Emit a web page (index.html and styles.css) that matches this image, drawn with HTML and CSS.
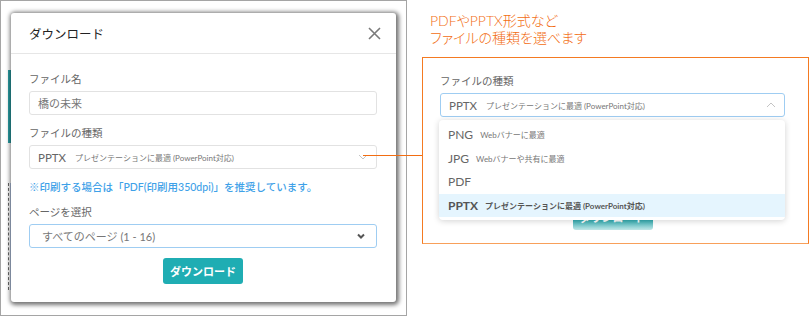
FILE: index.html
```html
<!DOCTYPE html>
<html lang="ja">
  <head>
    <meta charset="UTF-8" />
    <meta name="viewport" content="width=device-width, initial-scale=1.0" />
    <title>ダウンロード</title>
    <link rel="stylesheet" href="styles.css">
  </head>
  <body>
    <div class="page">
      <!-- left: modal screenshot -->
      <div class="shot">
        <div class="backdrop">
          <span class="strip teal"></span>
          <span class="strip dots"></span>
        </div>
        <div class="modal">
          <div class="modal-head">
            <h2>ダウンロード</h2>
            <svg class="close" width="13" height="13" viewBox="0 0 13 13">
              <path d="M1 1 L12 12 M12 1 L1 12" stroke="#7a7a7a" stroke-width="1.6" fill="none" />
            </svg>
          </div>
          <div class="modal-body">
            <div class="label">ファイル名</div>
            <div class="field">橋の未来</div>

            <div class="label gap">ファイルの種類</div>
            <div class="field select">
              <span class="fmt">PPTX</span>
              <span class="desc">プレゼンテーションに最適 (PowerPoint対応)</span>
              <svg class="chev" width="10" height="6" viewBox="0 0 10 6">
                <path d="M1 1 L5 5 L9 1" stroke="#c4c4c4" stroke-width="1" fill="none" />
              </svg>
            </div>

            <p class="note">※印刷する場合は「PDF(印刷用350dpi)」を推奨しています。</p>

            <div class="label gap-sm">ページを選択</div>
            <div class="field select focus pages">
              <span>すべてのページ (1 - 16)</span>
              <svg class="chev" width="8" height="6" viewBox="0 0 8 6">
                <path d="M1 1.5 L4 4.5 L7 1.5" stroke="#555" stroke-width="2" fill="none" />
              </svg>
            </div>

            <button class="btn">ダウンロード</button>
          </div>
        </div>
      </div>

      <span class="connector"></span>

      <!-- right: callout -->
      <div class="callout">
        <p class="callout-title">PDFやPPTX形式など<br />ファイルの種類を選べます</p>
        <div class="callout-box">
          <div class="label">ファイルの種類</div>
          <div class="field select focus">
            <span class="fmt">PPTX</span>
            <span class="desc">プレゼンテーションに最適 (PowerPoint対応)</span>
            <svg class="chev" width="10" height="6" viewBox="0 0 10 6">
              <path d="M1 5 L5 1 L9 5" stroke="#c4c4c4" stroke-width="1" fill="none" />
            </svg>
          </div>
          <div class="stack">
            <button class="btn faded">ダウンロード</button>
            <ul class="dropdown">
              <li><span class="fmt">PNG</span><span class="desc">Webバナーに最適</span></li>
              <li><span class="fmt">JPG</span><span class="desc">Webバナーや共有に最適</span></li>
              <li><span class="fmt">PDF</span></li>
              <li class="active"><span class="fmt">PPTX</span><span class="desc">プレゼンテーションに最適 (PowerPoint対応)</span></li>
            </ul>
          </div>
        </div>
      </div>
    </div>
  </body>
</html>
```

FILE: styles.css
```css
body {
  margin: 0;
  font-family: "Lato", "Noto Sans CJK JP", sans-serif;
  background: #fff;
}
.page {
  position: relative;
  display: flex;
  width: 809px;
  height: 316px;
}

/* left screenshot */
.shot {
  box-sizing: border-box;
  width: 407px;
  height: 316px;
  border: 1px solid #a5a5a5;
  display: grid;
  background: #fff;
}
.backdrop,
.modal {
  grid-area: 1 / 1;
}
.backdrop {
  display: flex;
  flex-direction: column;
  padding: 69px 0 0 7px;
}
.strip {
  display: block;
  width: 3px;
}
.strip.teal {
  height: 73px;
  background: #2a9ea4;
}
.strip.dots {
  margin-top: 40px;
  height: 107px;
  border-left: 1px dashed #666;
  border-right: 1px solid #b7c9e6;
  width: 1px;
}
.modal {
  align-self: start;
  justify-self: start;
  margin: 12px 0 0 10px;
  width: 385px;
  height: 289px;
  background: #fff;
  border-radius: 3px;
  box-shadow: 1px 1px 4px 2px rgba(0, 0, 0, 0.55);
}
.modal-head {
  height: 40px;
  border-bottom: 1px solid #e6e6e6;
  display: flex;
  align-items: center;
  justify-content: space-between;
  padding: 0 15px 0 18px;
}
.modal-head h2 {
  margin: 0;
  font-size: 12.5px;
  font-weight: 400;
  color: #222;
}
.modal-body {
  display: flex;
  flex-direction: column;
  padding: 17px 19px 0 18px;
}
.label {
  font-size: 10.5px;
  line-height: 16px;
  color: #666;
  margin-bottom: 4px;
}
.label.gap {
  margin-top: 10px;
}
.label.gap-sm {
  margin-top: 9px;
}
.field {
  box-sizing: border-box;
  height: 24px;
  border: 1px solid #e2e2e2;
  border-radius: 3px;
  padding: 0 8px;
  display: flex;
  align-items: center;
  font-size: 11px;
  color: #777;
}
.field.focus {
  border-color: #9fcdf2;
}
.field.pages {
  padding: 0 11px 0 12px;
}
.select .chev {
  margin-left: auto;
}
.fmt {
  font-size: 11.5px;
  color: #666;
}
.desc {
  font-size: 8px;
  color: #777;
  margin-left: 9px;
}
.note {
  margin: 10px 0 0;
  font-size: 10.5px;
  line-height: 16px;
  font-weight: 500;
  color: #3ea1e8;
}
.btn {
  align-self: center;
  width: 80px;
  height: 26px;
  margin-top: 10px;
  border: none;
  border-radius: 3px;
  background: #1fadb3;
  color: #fff;
  font-family: inherit;
  font-size: 11px;
  font-weight: bold;
}

/* connector line */
.connector {
  position: absolute;
  left: 363px;
  top: 155px;
  width: 59px;
  height: 1px;
  background: #f26d12;
}

/* right callout */
.callout {
  display: flex;
  flex-direction: column;
  padding: 12px 0 0 15px;
}
.callout-title {
  margin: 0 0 0 8px;
  font-feature-settings: "palt";
  font-size: 14px;
  line-height: 17px;
  font-weight: 300;
  color: #f26d12;
}
.callout-box {
  box-sizing: border-box;
  margin-top: 11px;
  width: 387px;
  height: 187px;
  border: 1px solid #f47a22;
  border-bottom-color: #f8a05a;
  padding: 15px 23px 13px 17px;
}
.stack {
  display: grid;
  height: 113px;
}
.stack > * {
  grid-area: 1 / 1;
}
.btn.faded {
  align-self: end;
  justify-self: center;
  background: linear-gradient(to bottom, #1aa2a7 55%, #c1e6e7);
}
.dropdown {
  align-self: start;
  list-style: none;
  margin: 3px 0 0 -1px;
  padding: 3px 0;
  background: #fff;
  border-radius: 4px;
  box-shadow: 0 1px 6px rgba(0, 0, 0, 0.18);
}
.dropdown li {
  display: flex;
  align-items: center;
  height: 23.5px;
  padding: 0 9px;
}
.dropdown .fmt {
  font-size: 12px;
}
.dropdown .desc {
  margin-left: 7px;
}
.dropdown li.active {
  background: #e5f5fe;
}
.dropdown li.active .fmt {
  font-weight: bold;
  color: #555;
}
.dropdown li.active .desc {
  font-weight: bold;
  color: #555;
}
```
